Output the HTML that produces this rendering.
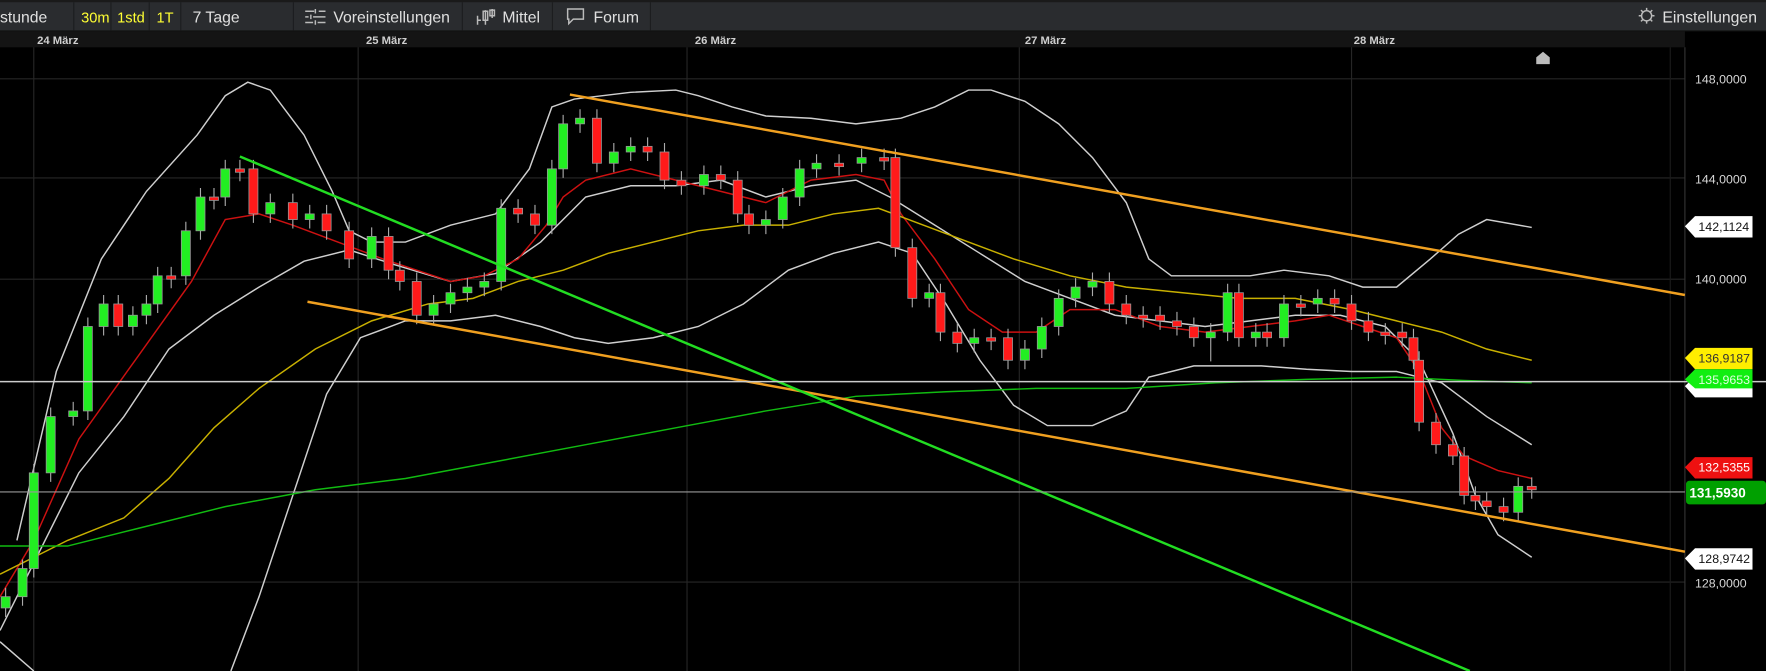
<!DOCTYPE html>
<html><head><meta charset="utf-8"><style>
html,body{margin:0;padding:0;background:#000;overflow:hidden}
svg{display:block}
text{font-family:"Liberation Sans",sans-serif}
.c rect{stroke:#999;stroke-width:0.7}
.g{fill:#22ee22}.r{fill:#ff1a1a}
</style></head><body>
<svg width="1766" height="671" viewBox="0 0 1568 596" preserveAspectRatio="none" xmlns="http://www.w3.org/2000/svg">
<rect width="1568" height="596" fill="#000"/>
<rect x="0" y="0" width="1568" height="28" fill="#2a2c2f"/>
<rect x="0" y="0" width="1568" height="2" fill="#1a1a1a"/>
<rect x="0" y="27" width="1568" height="1" fill="#111"/>
<g fill="#1c1d1f">
<rect x="65" y="2" width="1" height="25"/><rect x="98" y="2" width="1" height="25"/><rect x="132" y="2" width="1" height="25"/><rect x="160" y="2" width="1" height="25"/><rect x="260" y="2" width="1" height="25"/><rect x="410" y="2" width="1" height="25"/><rect x="490" y="2" width="1" height="25"/><rect x="577" y="2" width="1" height="25"/>
</g>
<g font-size="14" fill="#e0e0e0">
<text x="0" y="20">stunde</text>
<text x="72" y="20" fill="#ffff33" font-size="13">30m</text>
<text x="104" y="20" fill="#ffff33" font-size="13">1std</text>
<text x="139" y="20" fill="#ffff33" font-size="13">1T</text>
<text x="171" y="20">7 Tage</text>
<text x="296" y="20">Voreinstellungen</text>
<text x="446" y="20">Mittel</text>
<text x="527" y="20">Forum</text>
<text x="1476" y="20">Einstellungen</text>
</g>
<g stroke="#bbb" stroke-width="1.3" fill="none">
<path d="M271 10h8M283 10h6M271 15h3M278 15h11M271 20h7M282 20h7M280 8v4M276 13v4M280 18v4"/>
<path d="M424 14v8M427 18h-3M431 9v13M429 10h4v8h-4zM437 8v8M435 9h4v5h-4z"/>
<path d="M504 8h14v9h-9l-4 4v-4h-1z"/>
<circle cx="1462" cy="14" r="4.5"/><path d="M1455 14h2M1467 14h2M1462 7v2M1462 19v2M1457 9l1.5 1.5M1467 9l-1.5 1.5M1457 19l1.5-1.5M1467 19l-1.5-1.5"/>
</g>
<rect x="0" y="28" width="1568" height="14" fill="#141414"/>
<g font-size="10" fill="#cfcfcf" font-weight="bold">
<text x="33" y="39">24 März</text><text x="325" y="39">25 März</text><text x="617" y="39">26 März</text><text x="910" y="39">27 März</text><text x="1202" y="39">28 März</text>
</g>
<g stroke="#262626" stroke-width="1">
<path d="M30 42V596M318 42V596M610 42V596M905 42V596M1200 42V596"/>
<path d="M0 70H1500M0 158H1500M0 248H1500M0 517H1500"/>
</g>
<rect x="1496" y="28" width="72" height="568" fill="#000"/>
<path d="M1496 42V596" stroke="#333" stroke-width="1"/>
<path d="M1483 42V596" stroke="#1a1a1a" stroke-width="1"/>
<g font-size="11" fill="#d8d8d8">
<text x="1505" y="74">148,0000</text><text x="1505" y="163">144,0000</text><text x="1505" y="252">140,0000</text><text x="1505" y="522">128,0000</text>
</g>
<path d="M1364 57v-6l6-5 6 5v6z" fill="#bbb"/>
<g fill="none" stroke-width="1.3">
<polyline stroke="#cfcfcf" points="15,480 50,330 90,230 130,170 175,120 200,85 220,73 240,80 270,120 295,170 310,205 330,215 360,215 400,200 440,190 470,150 490,95 510,88 560,82 600,80 620,85 650,95 680,103 720,105 760,110 800,105 830,95 860,80 880,80 910,90 940,110 970,140 1000,180 1020,230 1040,245 1080,245 1110,245 1140,240 1180,245 1210,255 1240,255 1270,230 1295,208 1320,195 1360,202"/>
<polyline stroke="#cfcfcf" points="0,570 30,596"/>
<polyline stroke="#cfcfcf" points="205,596 230,530 260,440 290,350 320,300 360,285 400,285 440,280 480,290 510,300 540,305 580,300 620,290 660,270 700,240 740,225 780,215 810,225 840,270 870,320 900,360 930,378 970,378 1000,365 1020,335 1060,325 1120,325 1160,328 1200,330 1240,330 1280,340 1320,370 1360,395"/>
<polyline stroke="#cfcfcf" points="0,560 30,500 70,420 110,370 150,310 190,280 230,255 270,232 310,222 350,235 400,250 440,243 480,215 520,175 560,165 600,165 640,160 680,175 720,165 760,160 790,175 830,200 870,225 910,250 950,265 990,280 1030,285 1070,290 1110,285 1150,280 1190,280 1230,290 1260,320 1290,385 1310,440 1330,475 1360,495"/>
<polyline stroke="#cc1111" points="0,530 30,480 70,390 120,320 170,250 200,195 230,190 260,200 300,215 340,230 370,240 400,250 430,245 460,230 485,200 500,175 520,160 560,150 600,160 640,170 680,180 720,160 760,155 785,160 800,190 830,230 860,275 890,295 920,295 950,275 990,275 1030,290 1070,295 1110,290 1150,285 1180,280 1210,290 1240,300 1260,330 1280,380 1300,405 1330,418 1360,425"/>
<polyline stroke="#c8b000" points="0,510 60,480 110,460 150,425 190,380 230,345 280,310 330,285 380,270 420,265 460,250 500,240 540,225 580,215 620,205 660,200 700,200 740,190 780,185 820,200 860,215 900,230 950,245 1000,255 1050,260 1100,265 1150,265 1200,275 1240,285 1280,295 1320,310 1360,320"/>
<polyline stroke="#11bb11" points="0,485 60,485 120,470 200,450 280,435 360,425 440,410 520,395 600,380 680,365 760,352 840,348 920,345 1000,345 1080,340 1160,337 1240,335 1300,338 1360,340"/>
</g>
<path stroke="#aaa" stroke-width="1" fill="none" d="M5 522v26M20 497v41M30 412v101M45 362v66M65 357v21M78 282v91M92 262v36M105 262v36M118 272v26M130 262v26M140 237v41M152 237v19M165 197v56M178 167v46M190 167v19M200 142v41M213 142v19M225 142v56M240 172v26M260 172v31M275 182v21M290 182v31M310 197v41M330 202v36M345 202v46M355 232v26M370 242v46M385 262v26M400 252v26M415 247v21M430 242v21M445 177v81M460 177v21M475 182v26M490 142v66M500 102v56M515 97v21M530 97v56M545 127v26M560 122v21M575 122v21M590 127v41M605 152v21M625 147v26M640 147v21M655 152v46M665 182v26M680 187v21M695 167v36M710 142v41M725 137v21M745 137v19M765 132v21M785 132v19M795 132v96M810 212v61M825 252v21M835 252v51M850 287v26M865 292v21M880 292v19M895 292v36M910 302v26M925 282v36M940 257v41M955 247v26M970 242v21M985 242v36M1000 262v26M1015 272v19M1030 272v21M1045 277v21M1060 282v26M1075 287v34M1090 252v51M1100 252v56M1115 287v21M1125 287v21M1140 262v46M1155 262v19M1170 257v21M1185 257v21M1200 262v31M1215 277v26M1230 287v19M1245 287v21M1255 292v36M1260 312v71M1275 367v36M1290 387v26M1300 397v51M1310 432v21M1320 437v21M1335 442v21M1348 424v39M1360 424v19"/>
<g class="c">
<rect class="g" x="1" y="530" width="8" height="10"/><rect class="g" x="16" y="505" width="8" height="25"/><rect class="g" x="26" y="420" width="8" height="85"/><rect class="g" x="41" y="370" width="8" height="50"/><rect class="g" x="61" y="365" width="8" height="5"/><rect class="g" x="74" y="290" width="8" height="75"/><rect class="g" x="88" y="270" width="8" height="20"/><rect class="r" x="101" y="270" width="8" height="20"/><rect class="g" x="114" y="280" width="8" height="10"/><rect class="g" x="126" y="270" width="8" height="10"/><rect class="g" x="136" y="245" width="8" height="25"/><rect class="r" x="148" y="245" width="8" height="3"/><rect class="g" x="161" y="205" width="8" height="40"/><rect class="g" x="174" y="175" width="8" height="30"/><rect class="r" x="186" y="175" width="8" height="3"/><rect class="g" x="196" y="150" width="8" height="25"/><rect class="r" x="209" y="150" width="8" height="3"/><rect class="r" x="221" y="150" width="8" height="40"/><rect class="g" x="236" y="180" width="8" height="10"/><rect class="r" x="256" y="180" width="8" height="15"/><rect class="g" x="271" y="190" width="8" height="5"/><rect class="r" x="286" y="190" width="8" height="15"/><rect class="r" x="306" y="205" width="8" height="25"/><rect class="g" x="326" y="210" width="8" height="20"/><rect class="r" x="341" y="210" width="8" height="30"/><rect class="r" x="351" y="240" width="8" height="10"/><rect class="r" x="366" y="250" width="8" height="30"/><rect class="g" x="381" y="270" width="8" height="10"/><rect class="g" x="396" y="260" width="8" height="10"/><rect class="g" x="411" y="255" width="8" height="5"/><rect class="g" x="426" y="250" width="8" height="5"/><rect class="g" x="441" y="185" width="8" height="65"/><rect class="r" x="456" y="185" width="8" height="5"/><rect class="r" x="471" y="190" width="8" height="10"/><rect class="g" x="486" y="150" width="8" height="50"/><rect class="g" x="496" y="110" width="8" height="40"/><rect class="g" x="511" y="105" width="8" height="5"/><rect class="r" x="526" y="105" width="8" height="40"/><rect class="g" x="541" y="135" width="8" height="10"/><rect class="g" x="556" y="130" width="8" height="5"/><rect class="r" x="571" y="130" width="8" height="5"/><rect class="r" x="586" y="135" width="8" height="25"/><rect class="r" x="601" y="160" width="8" height="5"/><rect class="g" x="621" y="155" width="8" height="10"/><rect class="r" x="636" y="155" width="8" height="5"/><rect class="r" x="651" y="160" width="8" height="30"/><rect class="r" x="661" y="190" width="8" height="10"/><rect class="g" x="676" y="195" width="8" height="5"/><rect class="g" x="691" y="175" width="8" height="20"/><rect class="g" x="706" y="150" width="8" height="25"/><rect class="g" x="721" y="145" width="8" height="5"/><rect class="r" x="741" y="145" width="8" height="3"/><rect class="g" x="761" y="140" width="8" height="5"/><rect class="r" x="781" y="140" width="8" height="3"/><rect class="r" x="791" y="140" width="8" height="80"/><rect class="r" x="806" y="220" width="8" height="45"/><rect class="g" x="821" y="260" width="8" height="5"/><rect class="r" x="831" y="260" width="8" height="35"/><rect class="r" x="846" y="295" width="8" height="10"/><rect class="g" x="861" y="300" width="8" height="5"/><rect class="r" x="876" y="300" width="8" height="3"/><rect class="r" x="891" y="300" width="8" height="20"/><rect class="g" x="906" y="310" width="8" height="10"/><rect class="g" x="921" y="290" width="8" height="20"/><rect class="g" x="936" y="265" width="8" height="25"/><rect class="g" x="951" y="255" width="8" height="10"/><rect class="g" x="966" y="250" width="8" height="5"/><rect class="r" x="981" y="250" width="8" height="20"/><rect class="r" x="996" y="270" width="8" height="10"/><rect class="r" x="1011" y="280" width="8" height="3"/><rect class="r" x="1026" y="280" width="8" height="5"/><rect class="r" x="1041" y="285" width="8" height="5"/><rect class="r" x="1056" y="290" width="8" height="10"/><rect class="g" x="1071" y="295" width="8" height="5"/><rect class="g" x="1086" y="260" width="8" height="35"/><rect class="r" x="1096" y="260" width="8" height="40"/><rect class="g" x="1111" y="295" width="8" height="5"/><rect class="r" x="1121" y="295" width="8" height="5"/><rect class="g" x="1136" y="270" width="8" height="30"/><rect class="r" x="1151" y="270" width="8" height="3"/><rect class="g" x="1166" y="265" width="8" height="5"/><rect class="r" x="1181" y="265" width="8" height="5"/><rect class="r" x="1196" y="270" width="8" height="15"/><rect class="r" x="1211" y="285" width="8" height="10"/><rect class="r" x="1226" y="295" width="8" height="3"/><rect class="r" x="1241" y="295" width="8" height="5"/><rect class="r" x="1251" y="300" width="8" height="20"/><rect class="r" x="1256" y="320" width="8" height="55"/><rect class="r" x="1271" y="375" width="8" height="20"/><rect class="r" x="1286" y="395" width="8" height="10"/><rect class="r" x="1296" y="405" width="8" height="35"/><rect class="r" x="1306" y="440" width="8" height="5"/><rect class="r" x="1316" y="445" width="8" height="5"/><rect class="r" x="1331" y="450" width="8" height="5"/><rect class="g" x="1344" y="432" width="8" height="23"/><rect class="r" x="1356" y="432" width="8" height="3"/>
</g>
<g stroke-width="2.2" fill="none">
<path d="M506 84L1496 262" stroke="#f0a020"/>
<path d="M273 268L1496 490" stroke="#f0a020"/>
<path d="M213 139L1305 596" stroke="#22dd22"/>
</g>
<path d="M0 339H1568" stroke="#ccc" stroke-width="1.3"/>
<path d="M0 437H1496" stroke="#999" stroke-width="1"/>
<g font-size="11">
<path d="M1496 201l9-9h51v19h-51z" fill="#fff"/><text x="1508" y="205" fill="#111">142,1124</text>
<path d="M1496 343l9-9h51v19h-51z" fill="#fff"/>
<path d="M1496 318l9-9h51v19h-51z" fill="#ffee00"/><text x="1508" y="322" fill="#333">136,9187</text>
<path d="M1496 337l9-9h51v17h-51z" fill="#11ee11"/><text x="1508" y="341" fill="#dfffdf">135,9653</text>
<path d="M1496 415l9-9h51v19h-51z" fill="#ee1111"/><text x="1508" y="419" fill="#fff">132,5355</text>
<rect x="1497" y="427" width="71" height="21" rx="3" fill="#00a000"/><text x="1500" y="442" fill="#fff" font-weight="bold" font-size="12">131,5930</text>
<path d="M1496 496l9-9h51v19h-51z" fill="#fff"/><text x="1508" y="500" fill="#111">128,9742</text>
</g>
</svg>
</body></html>
